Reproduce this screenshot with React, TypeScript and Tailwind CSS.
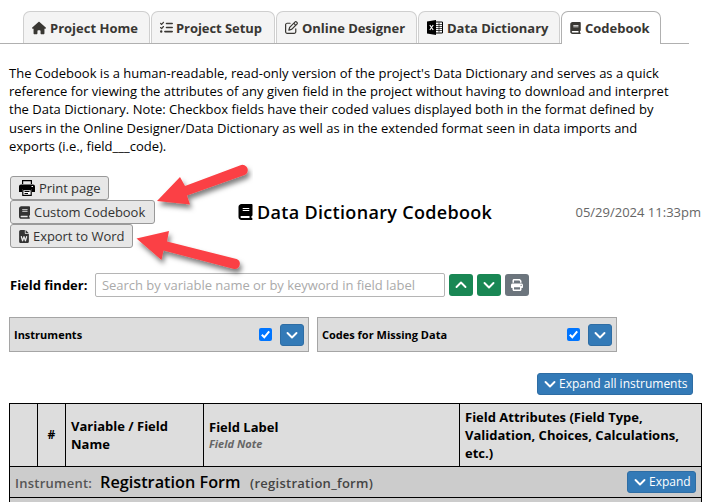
import React from "react";
import {
  FaBook,
  FaFileWord,
  FaHouse,
  FaListCheck,
  FaPrint,
  FaRegPenToSquare,
} from "react-icons/fa6";

function Chevron({ up }: { up?: boolean }) {
  return (
    <svg width="12" height="12" viewBox="0 0 12 12" className="shrink-0" fill="none">
      <path
        d={up ? "M1.500 8 6 3.500 10.500 8" : "M1.500 4 6 8.500 10.500 4"}
        stroke="currentColor"
        strokeWidth="1.900"
        strokeLinecap="round"
        strokeLinejoin="round"
      />
    </svg>
  );
}

function CheckMark() {
  return (
    <svg width="13" height="13" viewBox="0 0 13 13" fill="none">
      <path d="M2.800 6.800 5.300 9.300 10.200 3.300" stroke="currentColor" strokeWidth="2" />
    </svg>
  );
}

function ExcelIcon() {
  return (
    <svg width="16" height="15" viewBox="0 0 16 15" className="shrink-0">
      <path d="M0 1.600 9 0v15L0 13.400z" fill="#000" />
      <path d="M9 2h6.500v11H9" fill="#fff" stroke="#000" strokeWidth="1" />
      <path d="M9 4.500h6M9 6.500h6M9 8.500h6M9 10.500h6M12 2.500v10" stroke="#000" strokeWidth="0.700" />
      <path d="M2.800 5l3.400 5M6.200 5l-3.400 5" stroke="#fff" strokeWidth="1.100" />
    </svg>
  );
}

function PrinterIcon() {
  return (
    <svg width="16" height="16" viewBox="0 0 16 16" className="shrink-0">
      <path d="M3.600 4V.600h8.800V4" fill="none" stroke="#000" strokeWidth="1.200" />
      <path d="M2 4.400h12a2 2 0 0 1 2 2V12h-3V9H3v3H0V6.400a2 2 0 0 1 2-2z" fill="#000" />
      <path d="M3.800 9.600h8.400v5.800H3.800z" fill="#fff" stroke="#000" strokeWidth="1.200" />
      <path d="M5.500 11.500h5M5.500 13.500h3.500" stroke="#000" strokeWidth="1" />
      <path d="M12.500 6.500h1.500" stroke="#fff" strokeWidth="1" />
    </svg>
  );
}

type TabProps = {
  icon: React.ReactNode;
  label: string;
  className: string;
  active?: boolean;
};

function Tab({ icon, label, className, active }: TabProps) {
  return (
    <div
      className={`flex items-center rounded-t-[7px] border border-b-0 pl-2 text-[13px] font-bold text-[#393733] ${
        active ? "-mb-px h-[33px] border-[#b0b0b0] bg-white pb-px" : "h-8 border-[#cfcfcf] bg-[#f4f4f4]"
      } ${className}`}
    >
      {icon}
      <span>{label}</span>
    </div>
  );
}

function GreyButton({ icon, label, className }: { icon: React.ReactNode; label: string; className: string }) {
  return (
    <button
      className={`flex h-6 items-center rounded-[3px] border border-[#999] bg-[#e7e7e7] pl-2 text-[13px] tracking-[-0.050px] text-[#333] ${className}`}
    >
      {icon}
      <span>{label}</span>
    </button>
  );
}

function Panel({ title }: { title: string }) {
  return (
    <div className="flex h-[35px] w-[300px] items-center border border-[#a5a5a5] bg-[#ddd] pr-1 pl-1">
      <span className="flex-1 text-[11px] font-bold">{title}</span>
      <span className="mr-2 flex size-[13px] items-center justify-center rounded-[2px] bg-[#0075ff] text-white">
        <CheckMark />
      </span>
      <button className="flex h-[22px] w-6 items-center justify-center rounded-[3px] border border-[#2e6da4] bg-[#337ab7] text-white">
        <Chevron />
      </button>
    </div>
  );
}

function Arrows() {
  return (
    <svg width="120" height="130" viewBox="0 0 120 130" className="pointer-events-none absolute top-[155px] left-[133px]">
      <defs>
        <filter id="shade" x="-20%" y="-20%" width="150%" height="160%">
          <feDropShadow dx="2" dy="4" stdDeviation="2.500" floodColor="#000" floodOpacity="0.5" />
        </filter>
      </defs>
      <g fill="#fb4144" filter="url(#shade)">
        <path d="M24 46 47 22 52 31 107.500 10.200A5.200 5.200 0 0 1 111.500 20L54 40.500 57 49.500z" />
        <path d="M3.500 83.500 36 76 34 86.500 103.500 104A5.200 5.200 0 0 1 101 114L30.500 95.500 28.500 105z" />
      </g>
    </svg>
  );
}

export default function App() {
  return (
    <div className="relative flex h-[502px] w-[706px] flex-col overflow-hidden bg-white font-['Open_Sans',sans-serif] text-[13px] leading-[18px] text-black">
      <nav className="mt-[11px] flex h-[33px] w-[689px] shrink-0 items-start gap-px border-b border-[#b0b0b0] pl-[23px]">
        <Tab icon={<FaHouse size={14} />} label="Project Home" className="w-[127px] gap-1" />
        <Tab
          icon={<FaListCheck size={13} />}
          label="Project Setup"
          className="w-[124px] gap-[3px] tracking-[-0.060px]"
        />
        <Tab
          icon={<FaRegPenToSquare size={13} />}
          label="Online Designer"
          className="w-[141px] gap-1 tracking-[-0.040px]"
        />
        <Tab icon={<ExcelIcon />} label="Data Dictionary" className="w-[142px] gap-1 tracking-[-0.040px]" />
        <Tab icon={<FaBook className="h-3 w-[11px]" />} label="Codebook" className="w-[100px] gap-1" active />
      </nav>

      <p className="mt-5 ml-[9px] h-[92px] shrink-0 text-[13px] leading-[18.2px] whitespace-nowrap">
        The Codebook is a human-readable, read-only version of the project's Data Dictionary and serves as a quick
        <br />
        reference for viewing the attributes of any given field in the project without having to download and interpret
        <br />
        the Data Dictionary. Note: Checkbox fields have their coded values displayed both in the format defined by
        <br />
        users in the Online Designer/Data Dictionary as well as in the extended format seen in data imports and
        <br />
        exports (i.e., field___code).
      </p>

      <div className="mt-5 flex h-[72px] shrink-0 items-center pl-[10px]">
        <div className="flex w-[228px] flex-col">
          <GreyButton icon={<PrinterIcon />} label="Print page" className="w-[99px] gap-1" />
          <GreyButton
            icon={<FaBook className="h-[13px] w-[11px]" />}
            label="Custom Codebook"
            className="w-[145px] gap-1"
          />
          <GreyButton
            icon={<FaFileWord className="h-[13px] w-[10px]" />}
            label="Export to Word"
            className="w-[123px] gap-1"
          />
        </div>
        <h1 className="flex flex-1 items-center gap-1 text-[18px] font-semibold tracking-[0.320px]">
          <FaBook className="h-4 w-[15px]" />
          <span>Data Dictionary Codebook</span>
        </h1>
        <span className="mr-[5px] text-[13px] text-[#666]">05/29/2024 11:33pm</span>
      </div>

      <div className="mt-[25px] flex h-6 shrink-0 items-center pl-[10px]">
        <span className="w-[85px] font-bold">Field finder:</span>
        <div className="flex h-6 w-[350px] items-center rounded-[2px] border border-[#b5b5b5] pl-[6px] tracking-[-0.030px] text-[#aaa]">
          Search by variable name or by keyword in field label
        </div>
        <div className="ml-1 flex gap-1 text-white">
          <button className="flex h-[22px] w-6 items-center justify-center rounded-[3px] bg-[#198754]">
            <Chevron up />
          </button>
          <button className="flex h-[22px] w-6 items-center justify-center rounded-[3px] bg-[#198754]">
            <Chevron />
          </button>
          <button className="flex h-[22px] w-6 items-center justify-center rounded-[3px] bg-[#6c757d]">
            <FaPrint size={12} />
          </button>
        </div>
      </div>

      <div className="mt-5 flex shrink-0 gap-2 pl-[9px]">
        <Panel title="Instruments" />
        <Panel title="Codes for Missing Data" />
      </div>

      <div className="mt-[21px] flex shrink-0 justify-end pr-[13px]">
        <button className="flex h-[22px] w-[156px] items-center gap-[3px] rounded-[3px] border border-[#2e6da4] bg-[#337ab7] pl-[6px] text-[12px] text-white">
          <Chevron />
          <span>Expand all instruments</span>
        </button>
      </div>

      <section className="mt-2 ml-[9px] w-[693px] shrink-0 border border-black">
        <div className="flex h-[63px] items-center border-b border-black bg-[#ddd] font-bold">
          <div className="h-full w-7 border-r border-black" />
          <div className="flex h-full w-7 items-center justify-center border-r border-black text-[12px]">#</div>
          <div className="flex h-full w-[138px] items-center border-r border-black pl-[5px]">
            Variable / Field
            <br />
            Name
          </div>
          <div className="flex h-full w-[256px] flex-col justify-center border-r border-black pl-[5px]">
            <div>Field Label</div>
            <div className="text-[11px] leading-4 text-[#666] italic">Field Note</div>
          </div>
          <div className="pl-[5px]">
            Field Attributes (Field Type,
            <br />
            Validation, Choices, Calculations,
            <br />
            etc.)
          </div>
        </div>
        <div className="flex h-[31px] items-center border-b border-black bg-[#ccc] pr-[5px] pl-[5px]">
          <span className="w-[85px] pt-0.5 text-[13px] font-semibold tracking-[0.250px] text-[#555]">Instrument:</span>
          <span className="w-[150px] text-[16.250px] font-semibold">Registration Form</span>
          <span className="flex-1 pt-0.5 text-[13px] font-semibold tracking-[0.270px] text-[#444]">
            (registration_form)
          </span>
          <button className="flex h-[22px] w-[69px] items-center gap-[3px] rounded-[3px] border border-[#2e6da4] bg-[#337ab7] pl-[6px] text-[12px] text-white">
            <Chevron />
            <span>Expand</span>
          </button>
        </div>
        <div className="h-6 bg-[#ccc]" />
      </section>

      <Arrows />
    </div>
  );
}
